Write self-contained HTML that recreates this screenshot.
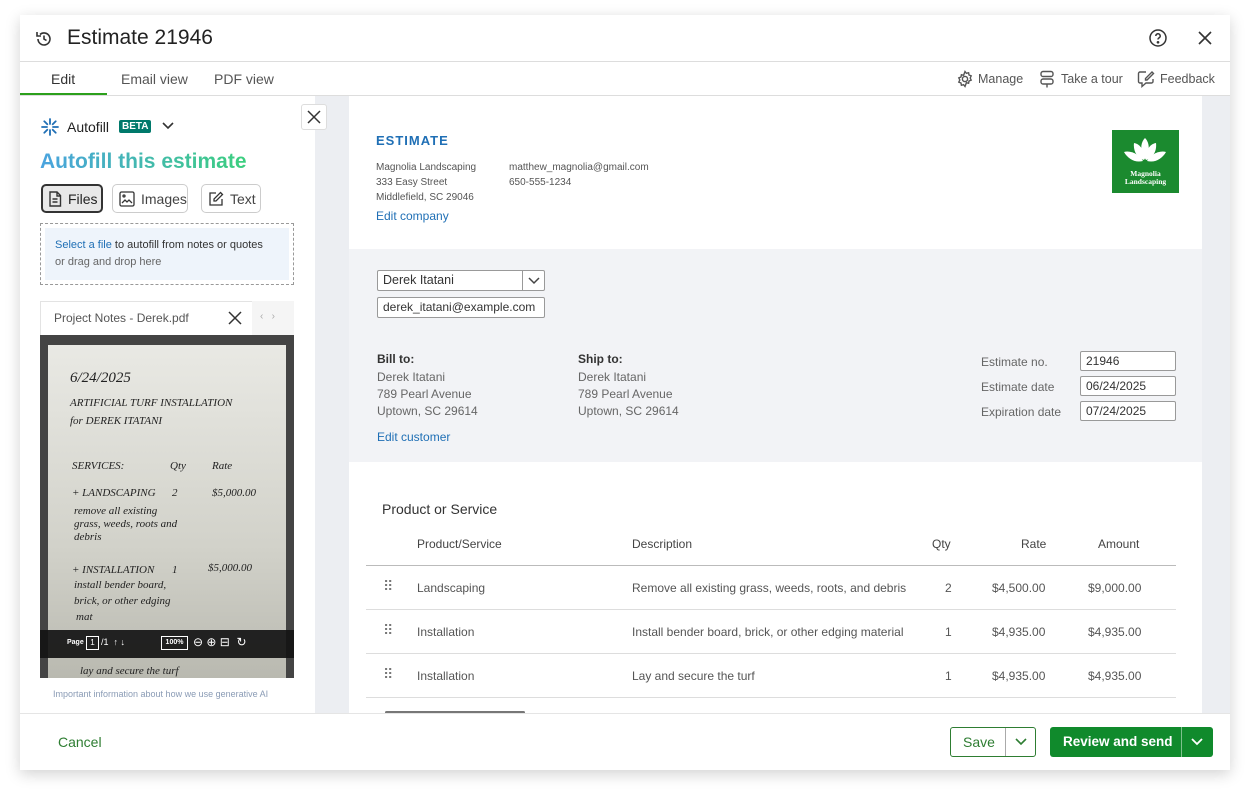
<!DOCTYPE html>
<html><head><meta charset="utf-8"><style>
*{box-sizing:border-box;margin:0;padding:0}
body{width:1250px;height:796px;background:#fff;font-family:"Liberation Sans",sans-serif;position:relative;overflow:hidden;color:#333}
.a{position:absolute}
.modal{left:20px;top:15px;width:1210px;height:755px;background:#fff;box-shadow:0 4px 14px rgba(0,0,0,.18);overflow:hidden}
.t{position:absolute;white-space:nowrap}
.doc{font-size:11.5px;color:#555}
.inp{position:absolute;border:1px solid #999;background:#fff;border-radius:2px;font-size:12.5px;color:#333;padding:2px 5px}
.hw{font-family:"Liberation Serif",serif;font-style:italic;color:#222;font-size:11px;position:absolute;white-space:nowrap}
.row{position:absolute;left:366px;width:810px;height:44px;border-bottom:1px solid #ddd;font-size:12px;color:#555}
.row span{position:absolute;top:15px;white-space:nowrap}
</style></head><body>
<div class="a modal">
 <svg class="a" style="left:14px;top:14px" width="20" height="20" viewBox="0 0 20 20" fill="none" stroke="#333" stroke-width="1.6"><path d="M4 10a6 6 0 1 0 2-4.5"/><path d="M3 3v4h4"/><path d="M10 6.5V10l2.5 1.5"/></svg>
 <div class="t" style="left:47px;top:11px;font-size:21px;color:#222">Estimate 21946</div>
 <svg class="a" style="left:1128px;top:13px" width="20" height="20" viewBox="0 0 20 20" fill="none" stroke="#333" stroke-width="1.5"><circle cx="10" cy="10" r="8"/><path d="M7.8 8a2.2 2.2 0 1 1 3 2c-.6.3-.8.7-.8 1.5"/><circle cx="10" cy="14.3" r=".6" fill="#333"/></svg>
 <svg class="a" style="left:1177px;top:15px" width="16" height="16" viewBox="0 0 16 16" stroke="#333" stroke-width="1.6"><path d="M2 2l12 12M14 2L2 14"/></svg>
 <div class="a" style="left:0;top:46px;width:1210px;height:1px;background:#ddd"></div>
 <div class="t" style="left:31px;top:56px;font-size:14px;color:#333">Edit</div>
 <div class="a" style="left:0;top:78px;width:87px;height:3px;background:#2ca01c"></div>
 <div class="t" style="left:101px;top:56px;font-size:14px;color:#555">Email view</div>
 <div class="t" style="left:194px;top:56px;font-size:14px;color:#555">PDF view</div>
 <svg class="a" style="left:936px;top:55px" width="18" height="18" viewBox="0 0 18 18" fill="none" stroke="#555" stroke-width="1.4"><circle cx="9" cy="9" r="2.6"/><path d="M9 1.5l1.4 1.8 2.2-.6.4 2.3 2.2.9-1 2.1 1 2.1-2.2.9-.4 2.3-2.2-.6L9 16.5l-1.4-1.8-2.2.6-.4-2.3-2.2-.9 1-2.1-1-2.1 2.2-.9.4-2.3 2.2.6z"/></svg>
 <div class="t" style="left:958px;top:57px;font-size:12.5px;color:#555">Manage</div>
 <svg class="a" style="left:1019px;top:55px" width="16" height="18" viewBox="0 0 16 18" fill="none" stroke="#555" stroke-width="1.4"><rect x="2" y="1.5" width="12" height="5" rx="2"/><rect x="2" y="9" width="12" height="5" rx="2"/><path d="M8 14v3.5"/></svg>
 <div class="t" style="left:1041px;top:57px;font-size:12.5px;color:#555">Take a tour</div>
 <svg class="a" style="left:1117px;top:55px" width="18" height="18" viewBox="0 0 18 18" fill="none" stroke="#555" stroke-width="1.4"><path d="M9 2H3a1.5 1.5 0 0 0-1.5 1.5v8A1.5 1.5 0 0 0 3 13h2v3.5L9 13h5.5a1.5 1.5 0 0 0 1.5-1.5V9"/><path d="M15 2l1.5 1.5L10 10H8.5V8.5z"/></svg>
 <div class="t" style="left:1140px;top:57px;font-size:12.5px;color:#555">Feedback</div>
 <div class="a" style="left:0;top:80px;width:1210px;height:1px;background:#ddd"></div>

 <div class="a" style="left:295px;top:81px;width:915px;height:617px;background:#eceef2"></div>
 <div class="a" style="left:0;top:81px;width:295px;height:617px;background:#fff"></div>
 <svg class="a" style="left:20px;top:102px" width="20" height="20" viewBox="0 0 20 20" stroke-width="1.8" stroke-linecap="round"><path d="M10 2v5M10 13v5M2 10h5M13 10h5M4.3 4.3l3 3M12.7 12.7l3 3M15.7 4.3l-3 3M4.3 15.7l3-3" stroke="#1f6fb5"/></svg>
 <div class="t" style="left:47px;top:104px;font-size:14px;color:#222">Autofill</div>
 <div class="t" style="left:99px;top:105px;font-size:10px;font-weight:bold;color:#fff;background:#00796b;padding:1px 3px;border-radius:2px">BETA</div>
 <svg class="a" style="left:141px;top:106px" width="14" height="10" viewBox="0 0 14 10" fill="none" stroke="#333" stroke-width="1.6"><path d="M2 2l5 5 5-5"/></svg>
 <div class="t" style="left:20px;top:135px;font-size:21px;font-weight:bold;background:linear-gradient(90deg,#4aa3df,#3ccf7e);-webkit-background-clip:text;color:transparent">Autofill this estimate</div>
 <div class="a" style="left:21px;top:169px;width:62px;height:29px;border:2px solid #333;border-radius:5px;background:#e8e8e8"></div>
 <svg class="a" style="left:28px;top:176px" width="14" height="16" viewBox="0 0 14 16" fill="none" stroke="#333" stroke-width="1.4"><path d="M2 1h7l3.5 3.5V15H2z M9 1v4h3.5M4.5 8h5M4.5 11h5"/></svg>
 <div class="t" style="left:48px;top:176px;font-size:14px;color:#222">Files</div>
 <div class="a" style="left:92px;top:169px;width:76px;height:29px;border:1.5px solid #ccc;border-radius:5px"></div>
 <svg class="a" style="left:99px;top:176px" width="16" height="16" viewBox="0 0 16 16" fill="none" stroke="#333" stroke-width="1.3"><rect x="1" y="1" width="14" height="14" rx="1.5"/><path d="M3 12l3-3 2 2 2-2 3 3"/><circle cx="5" cy="5" r="1"/></svg>
 <div class="t" style="left:121px;top:176px;font-size:14px;color:#444">Images</div>
 <div class="a" style="left:181px;top:169px;width:60px;height:29px;border:1.5px solid #ccc;border-radius:5px"></div>
 <svg class="a" style="left:188px;top:176px" width="16" height="16" viewBox="0 0 16 16" fill="none" stroke="#333" stroke-width="1.3"><path d="M8 2H2v12h12V8"/><path d="M12.5 1.5l2 2L8 10H6V8z"/></svg>
 <div class="t" style="left:210px;top:176px;font-size:14px;color:#444">Text</div>
 <div class="a" style="left:20px;top:208px;width:254px;height:62px;border:1px dashed #999;padding:4px"><div style="background:#eef4fb;height:100%"></div></div>
 <div class="t" style="left:35px;top:224px;font-size:11px;color:#333"><span style="color:#1f6fb5">Select a file</span> to autofill from notes or quotes</div>
 <div class="t" style="left:35px;top:241px;font-size:11px;color:#666">or drag and drop here</div>
 <div class="a" style="left:20px;top:286px;width:254px;height:35px;border:1px solid #e3e3e3;border-bottom:none;background:#fff"></div>
 <div class="a" style="left:232px;top:286px;width:42px;height:35px;background:#f5f5f5"></div>
 <div class="t" style="left:34px;top:296px;font-size:12px;color:#555">Project Notes - Derek.pdf</div>
 <svg class="a" style="left:208px;top:296px" width="14" height="14" viewBox="0 0 14 14" stroke="#333" stroke-width="1.5"><path d="M1 1l12 12M13 1L1 13"/></svg>
 <div class="t" style="left:240px;top:296px;font-size:10px;color:#aaa">‹ &nbsp; ›</div>
 <div class="a" style="left:20px;top:320px;width:254px;height:343px;background:#444"></div>
 <div class="a" style="left:28px;top:330px;width:238px;height:333px;background:linear-gradient(180deg,#e9e9e4,#d2d2ca 60%,#b9b9b0)"></div>
 <div class="hw" style="left:50px;top:355px;font-size:15px">6/24/2025</div>
 <div class="hw" style="left:50px;top:382px">ARTIFICIAL TURF INSTALLATION</div>
 <div class="hw" style="left:50px;top:400px">for DEREK ITATANI</div>
 <div class="hw" style="left:52px;top:445px">SERVICES:</div>
 <div class="hw" style="left:150px;top:445px">Qty</div>
 <div class="hw" style="left:192px;top:445px">Rate</div>
 <div class="hw" style="left:52px;top:472px">+ LANDSCAPING</div>
 <div class="hw" style="left:152px;top:472px">2</div>
 <div class="hw" style="left:192px;top:472px">$5,000.00</div>
 <div class="hw" style="left:54px;top:490px">remove all existing</div>
 <div class="hw" style="left:54px;top:503px">grass, weeds, roots and</div>
 <div class="hw" style="left:54px;top:516px">debris</div>
 <div class="hw" style="left:52px;top:549px">+ INSTALLATION</div>
 <div class="hw" style="left:152px;top:549px">1</div>
 <div class="hw" style="left:188px;top:547px">$5,000.00</div>
 <div class="hw" style="left:54px;top:564px">install bender board,</div>
 <div class="hw" style="left:54px;top:580px">brick, or other edging</div>
 <div class="hw" style="left:56px;top:596px">mat</div>
 <div class="hw" style="left:60px;top:650px">lay and secure the turf</div>
 <div class="a" style="left:20px;top:615px;width:254px;height:28px;background:rgba(20,20,20,.92)"></div>
 <div class="t" style="left:47px;top:624px;font-size:7px;color:#fff;font-weight:bold">Page</div>
 <div class="t" style="left:66px;top:621px;width:13px;height:14px;border:1px solid #fff;font-size:8px;color:#fff;text-align:center;line-height:12px">1</div>
 <div class="t" style="left:81px;top:622px;font-size:9px;color:#fff">/1 &nbsp;↑ ↓</div>
 <div class="t" style="left:141px;top:621px;width:27px;height:14px;border:1px solid #fff;font-size:7px;color:#fff;text-align:center;line-height:12px;font-weight:bold">100%</div>
 <div class="t" style="left:173px;top:620px;font-size:12px;color:#fff">⊖ ⊕ ⊟ &nbsp;↻</div>
 <div class="t" style="left:33px;top:674px;font-size:9px;color:#8a9bb5">Important information about how we use generative AI</div>
 <div class="a" style="left:281px;top:89px;width:26px;height:26px;border:1px solid #ddd;border-radius:3px;background:#fff"></div>
 <svg class="a" style="left:287px;top:95px" width="14" height="14" viewBox="0 0 14 14" stroke="#333" stroke-width="1.5"><path d="M1 1l12 12M13 1L1 13"/></svg>

 <div class="a" style="left:329px;top:81px;width:853px;height:617px;background:#fff"></div>
 <div class="a" style="left:329px;top:234px;width:853px;height:213px;background:#f2f3f6"></div>
 <div class="t" style="left:356px;top:118px;font-size:13px;font-weight:bold;color:#1f6fb5;letter-spacing:1px">ESTIMATE</div>
 <div class="t doc" style="left:356px;top:145px;font-size:10px;line-height:15px">Magnolia Landscaping<br>333 Easy Street<br>Middlefield, SC 29046</div>
 <div class="t doc" style="left:489px;top:145px;font-size:10px;line-height:15px">matthew_magnolia@gmail.com<br>650-555-1234</div>
 <div class="t" style="left:356px;top:194px;font-size:12px;color:#1f6fb5">Edit company</div>
 <div class="a" style="left:1092px;top:115px;width:67px;height:63px;background:#1b8a2f"></div>
 <svg class="a" style="left:1100px;top:120px" width="50" height="34" viewBox="0 0 50 34" fill="#fff"><path d="M25 3c5 5 5 14 0 22-5-8-5-17 0-22z"/><path d="M14 8c7 1 11 9 10 17-7-2-11-9-10-17z"/><path d="M36 8c-7 1-11 9-10 17 7-2 11-9 10-17z"/><path d="M4 17c7-2 16 3 19 9-8 2-15-2-19-9z"/><path d="M46 17c-7-2-16 3-19 9 8 2 15-2 19-9z"/></svg>
 <div class="t" style="left:1092px;top:155px;width:67px;text-align:center;font-family:'Liberation Serif',serif;font-size:7.5px;font-weight:bold;color:#fff;line-height:8px">Magnolia<br>Landscaping</div>

 <div class="inp" style="left:357px;top:255px;width:168px;height:21px">Derek Itatani</div>
 <div class="a" style="left:502px;top:255px;width:1px;height:21px;background:#999"></div>
 <svg class="a" style="left:507px;top:261px" width="14" height="9" viewBox="0 0 14 9" fill="none" stroke="#444" stroke-width="1.5"><path d="M2 2l5 5 5-5"/></svg>
 <div class="inp" style="left:357px;top:282px;width:168px;height:21px;font-size:12px">derek_itatani@example.com</div>
 <div class="t" style="left:357px;top:337px;font-size:12px;font-weight:bold;color:#333">Bill to:</div>
 <div class="t" style="left:357px;top:354px;font-size:12px;color:#666;line-height:17px">Derek Itatani<br>789 Pearl Avenue<br>Uptown, SC 29614</div>
 <div class="t" style="left:558px;top:337px;font-size:12px;font-weight:bold;color:#333">Ship to:</div>
 <div class="t" style="left:558px;top:354px;font-size:12px;color:#666;line-height:17px">Derek Itatani<br>789 Pearl Avenue<br>Uptown, SC 29614</div>
 <div class="t" style="left:357px;top:415px;font-size:12px;color:#1f6fb5">Edit customer</div>
 <div class="t" style="left:961px;top:335px;font-size:12px;color:#666;line-height:25px">Estimate no.<br>Estimate date<br>Expiration date</div>
 <div class="inp" style="left:1060px;top:336px;width:96px;height:20px;font-size:12px">21946</div>
 <div class="inp" style="left:1060px;top:361px;width:96px;height:20px;font-size:12px">06/24/2025</div>
 <div class="inp" style="left:1060px;top:386px;width:96px;height:20px;font-size:12px">07/24/2025</div>

 <div class="t" style="left:362px;top:486px;font-size:14px;color:#333">Product or Service</div>
 <div class="a" style="left:346px;top:508px;width:810px;height:43px;border-bottom:1px solid #bbb;font-size:12px;color:#444">
  <span class="t" style="left:51px;top:14px">Product/Service</span>
  <span class="t" style="left:266px;top:14px">Description</span>
  <span class="t" style="left:566px;top:14px">Qty</span>
  <span class="t" style="left:655px;top:14px">Rate</span>
  <span class="t" style="left:732px;top:14px">Amount</span>
 </div>
 <div class="row" style="left:346px;top:551px"><span style="left:17px;top:12px;color:#777;font-size:14px;letter-spacing:-1px">⠿</span><span style="left:51px">Landscaping</span><span style="left:266px">Remove all existing grass, weeds, roots, and debris</span><span style="left:579px">2</span><span style="left:626px">$4,500.00</span><span style="left:722px">$9,000.00</span></div>
 <div class="row" style="left:346px;top:595px"><span style="left:17px;top:12px;color:#777;font-size:14px;letter-spacing:-1px">⠿</span><span style="left:51px">Installation</span><span style="left:266px">Install bender board, brick, or other edging material</span><span style="left:579px">1</span><span style="left:626px">$4,935.00</span><span style="left:722px">$4,935.00</span></div>
 <div class="row" style="left:346px;top:639px"><span style="left:17px;top:12px;color:#777;font-size:14px;letter-spacing:-1px">⠿</span><span style="left:51px">Installation</span><span style="left:266px">Lay and secure the turf</span><span style="left:579px">1</span><span style="left:626px">$4,935.00</span><span style="left:722px">$4,935.00</span></div>
 <div class="a" style="left:365px;top:696px;width:140px;height:3px;background:#777;border-radius:2px"></div>

 <div class="a" style="left:0;top:698px;width:1210px;height:57px;background:#fff;border-top:1px solid #e5e5e5"></div>
 <div class="t" style="left:38px;top:719px;font-size:14px;color:#2e7d32">Cancel</div>
 <div class="a" style="left:930px;top:712px;width:86px;height:30px;border:1.5px solid #2e7d32;border-radius:3px"></div>
 <div class="a" style="left:985px;top:713px;width:1px;height:28px;background:#aaa"></div>
 <div class="t" style="left:943px;top:719px;font-size:14px;color:#2e7d32">Save</div>
 <svg class="a" style="left:994px;top:722px" width="14" height="9" viewBox="0 0 14 9" fill="none" stroke="#2e7d32" stroke-width="1.6"><path d="M2 2l5 5 5-5"/></svg>
 <div class="a" style="left:1030px;top:712px;width:163px;height:30px;background:#108a2c;border-radius:3px"></div>
 <div class="a" style="left:1161px;top:712px;width:1px;height:30px;background:#7fc18d"></div>
 <div class="t" style="left:1043px;top:719px;font-size:13.5px;color:#fff;font-weight:bold">Review and send</div>
 <svg class="a" style="left:1170px;top:722px" width="14" height="9" viewBox="0 0 14 9" fill="none" stroke="#fff" stroke-width="1.8"><path d="M2 2l5 5 5-5"/></svg>
</div>
</body></html>
